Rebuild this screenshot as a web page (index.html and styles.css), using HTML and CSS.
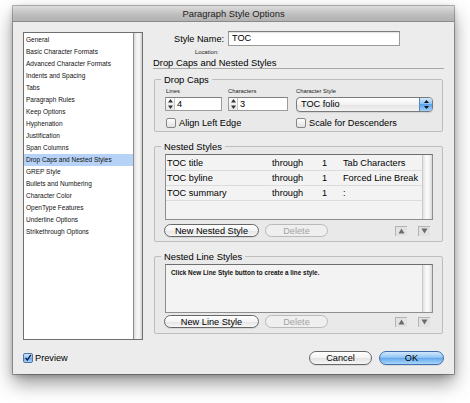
FILE: index.html
```html
<!DOCTYPE html>
<html>
<head>
<meta charset="utf-8">
<title>Paragraph Style Options</title>
<link rel="stylesheet" href="styles.css">
</head>
<body>
<div class="window">
  <div class="titlebar">Paragraph Style Options</div>
  <div class="body">
    <div class="sidebar">
      <ul class="cat-list">
        <li>General</li>
        <li>Basic Character Formats</li>
        <li>Advanced Character Formats</li>
        <li>Indents and Spacing</li>
        <li>Tabs</li>
        <li>Paragraph Rules</li>
        <li>Keep Options</li>
        <li>Hyphenation</li>
        <li>Justification</li>
        <li>Span Columns</li>
        <li class="selected">Drop Caps and Nested Styles</li>
        <li>GREP Style</li>
        <li>Bullets and Numbering</li>
        <li>Character Color</li>
        <li>OpenType Features</li>
        <li>Underline Options</li>
        <li>Strikethrough Options</li>
      </ul>
      <div class="vscroll"></div>
    </div>
    <div class="main">
      <div class="style-row">
        <span class="label">Style Name:</span>
        <div class="text-input">TOC</div>
      </div>
      <div class="location">Location:</div>
      <div class="section-title">Drop Caps and Nested Styles</div>

      <fieldset class="group group-dropcaps">
        <legend>Drop Caps</legend>
        <div class="dc-grid dc-labels">
          <span>Lines</span>
          <span>Characters</span>
          <span>Character Style</span>
        </div>
        <div class="dc-grid dc-inputs">
          <div class="spin spin-lines">
            <span class="spin-arrows"><svg width="7" height="12" viewBox="0 0 7 12"><path d="M3.5 1 L6 4.5 L1 4.5 Z" fill="#333"/><path d="M3.5 11 L6 7.5 L1 7.5 Z" fill="#333"/></svg></span>
            <span class="spin-val">4</span>
          </div>
          <div class="spin spin-chars">
            <span class="spin-arrows"><svg width="7" height="12" viewBox="0 0 7 12"><path d="M3.5 1 L6 4.5 L1 4.5 Z" fill="#333"/><path d="M3.5 11 L6 7.5 L1 7.5 Z" fill="#333"/></svg></span>
            <span class="spin-val">3</span>
          </div>
          <div class="select">
            <span class="select-val">TOC folio</span>
            <span class="select-cap"><svg width="7" height="11" viewBox="0 0 7 11"><path d="M3.5 1 L6 4 L1 4 Z" fill="#111"/><path d="M3.5 10 L6 7 L1 7 Z" fill="#111"/></svg></span>
          </div>
        </div>
        <div class="dc-grid dc-checks">
          <label class="check check-align"><span class="cb"></span>Align Left Edge</label>
          <label class="check check-scale"><span class="cb"></span>Scale for Descenders</label>
        </div>
      </fieldset>

      <fieldset class="group group-nested">
        <legend>Nested Styles</legend>
        <div class="listbox nested-list">
          <div class="rows">
            <div class="row"><span>TOC title</span><span>through</span><span>1</span><span>Tab Characters</span></div>
            <div class="row"><span>TOC byline</span><span>through</span><span>1</span><span>Forced Line Break</span></div>
            <div class="row"><span>TOC summary</span><span>through</span><span>1</span><span>:</span></div>
          </div>
          <div class="lscroll"></div>
        </div>
        <div class="btn-row">
          <span class="btn btn-new">New Nested Style</span>
          <span class="btn btn-disabled">Delete</span>
          <span class="arrow-btn arrow-up"><svg width="7" height="6" viewBox="0 0 7 6"><path d="M3.5 0.5 L6.5 5.5 L0.5 5.5 Z" fill="#6a6a6a"/></svg></span>
          <span class="arrow-btn arrow-down"><svg width="7" height="6" viewBox="0 0 7 6"><path d="M3.5 5.5 L6.5 0.5 L0.5 0.5 Z" fill="#6a6a6a"/></svg></span>
        </div>
      </fieldset>

      <fieldset class="group group-line">
        <legend>Nested Line Styles</legend>
        <div class="listbox line-list">
          <div class="hint">Click New Line Style button to create a line style.</div>
          <div class="lscroll"></div>
        </div>
        <div class="btn-row">
          <span class="btn btn-new">New Line Style</span>
          <span class="btn btn-disabled">Delete</span>
          <span class="arrow-btn arrow-up"><svg width="7" height="6" viewBox="0 0 7 6"><path d="M3.5 0.5 L6.5 5.5 L0.5 5.5 Z" fill="#6a6a6a"/></svg></span>
          <span class="arrow-btn arrow-down"><svg width="7" height="6" viewBox="0 0 7 6"><path d="M3.5 5.5 L6.5 0.5 L0.5 0.5 Z" fill="#6a6a6a"/></svg></span>
        </div>
      </fieldset>
    </div>
  </div>
  <div class="footer">
    <label class="preview"><span class="cb cb-on"><svg width="10" height="10" viewBox="0 0 10 10"><path d="M2 4.8 L4.2 7.6 L8.6 1" fill="none" stroke="#10204a" stroke-width="1.8"/></svg></span>Preview</label>
    <span class="btn btn-cancel">Cancel</span>
    <span class="btn btn-ok">OK</span>
  </div>
</div>
</body>
</html>
```
FILE: styles.css
```css
* { box-sizing: border-box; }
html, body { margin: 0; padding: 0; }
body {
  width: 470px;
  height: 403px;
  overflow: hidden;
  background: #ffffff;
  font-family: "Liberation Sans", Arial, sans-serif;
  color: #000;
  font-size: 9.2px;
}

.window {
  margin: 6px 0 0 13px;
  width: 441px;
  height: 368px;
  background: #ececec;
  box-shadow: 0 0 0 1px rgba(0,0,0,0.28), 0 9px 18px rgba(0,0,0,0.42), 0 2px 6px rgba(0,0,0,0.2);
  display: flex;
  flex-direction: column;
}

.titlebar {
  height: 16px;
  line-height: 15px;
  text-align: center;
  font-size: 9.4px;
  color: #1c1c1c;
  background: linear-gradient(#dcdcdc, #bdbdbd 60%, #b2b2b2);
  border-bottom: 1px solid #8a8a8a;
}

.body {
  display: flex;
  padding: 9px 0 0 10px;
}

/* Sidebar */
.sidebar {
  margin-top: 1px;
  width: 120px;
  height: 308px;
  border: 1px solid #6f6f6f;
  background: #fff;
  display: flex;
}
.cat-list {
  list-style: none;
  margin: 0;
  padding: 1px 0 0 0;
  flex: 1;
}
.cat-list li {
  height: 12px;
  line-height: 12px;
  padding-left: 2px;
  font-size: 6.5px;
  color: #111;
  white-space: nowrap;
}
.cat-list li.selected { background: #b6d3f7; }
.vscroll {
  width: 9px;
  border-left: 1px solid #8c8c8c;
  background: linear-gradient(to right, #d9d9d9, #f7f7f7 40%, #f2f2f2 70%, #cfcfcf);
}

/* Main */
.main {
  margin-left: 10px;
  width: 291px;
}
.style-row {
  display: flex;
  align-items: center;
  height: 15px;
  padding-left: 21px;
}
.style-row .label { font-size: 9.2px; width: 54px; }
.text-input {
  width: 172px;
  height: 15px;
  line-height: 13px;
  padding-left: 3px;
  background: #fff;
  border: 1px solid #9a9a9a;
  border-top-color: #7c7c7c;
  box-shadow: inset 0 1px 1px rgba(0,0,0,0.12);
  font-size: 9.2px;
}
.location {
  height: 11px;
  line-height: 10px;
  padding-top: 1px;
  padding-left: 42px;
  font-size: 5.8px;
  color: #222;
}
.section-title {
  height: 12px;
  line-height: 11px;
  font-size: 9.4px;
  border-bottom: 1px solid #a9a9a9;
}

/* Groups */
.group {
  margin: 5px 1px 0 1px;
  padding: 0 9px 3px 10px;
  border: 1px solid #bdbdbd;
  border-radius: 2px;
  background: #e9e9e9;
  min-width: 0;
}
.group legend {
  padding: 0 3px;
  margin-left: -4px;
  height: 11px;
  line-height: 11px;
  font-size: 9.4px;
}
.group-nested { margin-top: 9px; padding-bottom: 4px; }
.group-line { margin-top: 9px; padding-bottom: 5px; }

.dc-grid {
  display: grid;
  grid-template-columns: 63px 68px 137px;
}
.dc-labels {
  margin-top: 2px;
  height: 8px;
  line-height: 8px;
  font-size: 5.8px;
  color: #222;
}
.dc-labels span:first-child { padding-left: 1px; }
.dc-inputs {
  margin-top: 2px;
  height: 15px;
  align-items: start;
}
.spin {
  display: flex;
  height: 14px;
  background: #fff;
  border: 1px solid #9c9c9c;
  border-top-color: #808080;
}
.spin-lines { width: 57px; }
.spin-chars { width: 60px; }
.spin-arrows {
  width: 9px;
  display: flex;
  align-items: center;
  justify-content: center;
  border-right: 1px solid #c6c6c6;
  background: linear-gradient(#fdfdfd, #e8e8e8);
}
.spin-val {
  padding-left: 2px;
  line-height: 12px;
  font-size: 9.2px;
}
.select {
  display: flex;
  height: 15px;
  border: 1px solid #7a7a7a;
  border-radius: 4px;
  background: linear-gradient(#ffffff, #f1f1f1 50%, #e3e3e3 51%, #f4f4f4);
  overflow: hidden;
  box-shadow: 0 1px 1px rgba(0,0,0,0.1);
}
.select-val {
  flex: 1;
  padding-left: 4px;
  line-height: 13px;
  font-size: 9.2px;
}
.select-cap {
  width: 13px;
  display: flex;
  align-items: center;
  justify-content: center;
  border-left: 1px solid #5a86c0;
  background: linear-gradient(#d4e9fc, #8fc3f3 45%, #5ea3ea 50%, #9fd2fb);
}
.dc-checks {
  margin-top: 6px;
  height: 10px;
}
.check {
  display: flex;
  align-items: center;
  height: 10px;
  font-size: 9.2px;
}
.check-align { grid-column: 1 / 3; padding-left: 1px; }
.check-scale { grid-column: 3; }
.cb {
  width: 10px;
  height: 10px;
  margin-right: 3px;
  border: 1px solid #878787;
  border-radius: 2px;
  background: linear-gradient(#ffffff, #e0e0e0);
  display: flex;
  align-items: center;
  justify-content: center;
  flex: none;
}

/* Lists */
.listbox {
  display: flex;
  margin-top: 2px;
  border: 1px solid #8e8e8e;
  border-top-color: #6e6e6e;
  background: #f3f3f3;
}
.nested-list { height: 66px; }
.line-list { height: 49px; }
.rows { flex: 1; padding-top: 1px; }
.row {
  display: grid;
  grid-template-columns: 105px 50px 21px 1fr;
  height: 15px;
  line-height: 14px;
  padding-left: 1px;
  border-bottom: 1px solid #dcdcdc;
  font-size: 9.2px;
  white-space: nowrap;
}
.lscroll {
  width: 10px;
  border-left: 1px solid #c9c9c9;
  background: linear-gradient(to right, #e2e2e2, #fbfbfb 40%, #f3f3f3 70%, #d6d6d6);
}
.hint {
  flex: 1;
  padding: 3px 0 0 5px;
  line-height: 10px;
  font-size: 6.4px;
  font-weight: bold;
  color: #111;
}

/* Buttons */
.btn-row {
  display: flex;
  align-items: center;
  height: 13px;
  margin-top: 4px;
  margin-left: -1px;
}
.group-line .btn-row { margin-top: 2px; }
.btn {
  display: inline-flex;
  align-items: center;
  justify-content: center;
  height: 13px;
  border: 1px solid #686868;
  border-radius: 7px;
  background: linear-gradient(#ffffff, #f3f3f3 50%, #e4e4e4 51%, #f6f6f6);
  font-size: 9.2px;
  box-shadow: 0 1px 0 rgba(0,0,0,0.08);
}
.btn-new { width: 95px; }
.btn-disabled {
  width: 63px;
  margin-left: 6px;
  border-color: #b9b9b9;
  color: #a3a3a3;
  background: #efefef;
  box-shadow: none;
}
.arrow-btn {
  width: 12px;
  height: 10px;
  display: flex;
  align-items: center;
  justify-content: center;
  border-left: 1px solid #b3b3b3;
  border-top: 1px solid #b3b3b3;
  background: #e2e2e2;
}
.arrow-up { margin-left: auto; }
.arrow-down { margin-left: 11px; margin-right: 3px; }

/* Footer */
.footer {
  display: flex;
  align-items: center;
  height: 14px;
  margin-top: 11px;
  padding: 0 10px 0 10px;
}
.preview {
  display: flex;
  align-items: center;
  font-size: 9.2px;
  margin-right: auto;
}
.cb-on {
  margin-right: 2px;
  border-color: #4f74a8;
  background: linear-gradient(#cfe5fb, #8ec1f1 50%, #6aa8ea 51%, #a7d4fb);
}
.btn-cancel { width: 63px; height: 14px; }
.btn-ok {
  width: 65px;
  height: 14px;
  margin-left: 7px;
  border-color: #3f6fae;
  background: linear-gradient(#d2e8fc, #93c6f4 45%, #62a6ec 50%, #a9d6fc);
}
```
